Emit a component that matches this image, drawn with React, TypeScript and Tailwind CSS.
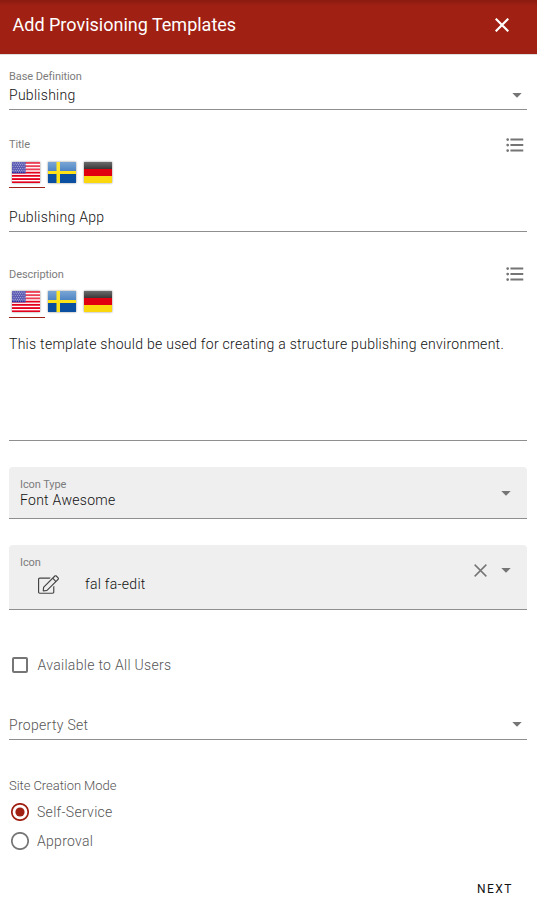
import React, { useState } from "react";

function Caret() {
  return (
    <svg className="block h-[5px] w-[10px] shrink-0" viewBox="0 0 10 5" fill="#757575">
      <path d="M0.3 0H9.7L5 4.8Z" />
    </svg>
  );
}

function Cross({ className, width }: { className: string; width: number }) {
  return (
    <svg className={className} viewBox="0 0 14 14" fill="none" stroke="currentColor" strokeWidth={width}>
      <path d="M0.7 0.7L13.3 13.3M13.3 0.7L0.7 13.3" />
    </svg>
  );
}

function ListIcon() {
  return (
    <svg className="mr-[1px] block size-[22px]" viewBox="0 0 24 24" fill="#757575">
      <path d="M7 5H21V7H7V5M7 13V11H21V13H7M4 4.5A1.5 1.5 0 0 1 5.5 6A1.5 1.5 0 0 1 4 7.5A1.5 1.5 0 0 1 2.5 6A1.5 1.5 0 0 1 4 4.5M4 10.5A1.5 1.5 0 0 1 5.5 12A1.5 1.5 0 0 1 4 13.5A1.5 1.5 0 0 1 2.5 12A1.5 1.5 0 0 1 4 10.5M7 19V17H21V19H7M4 16.5A1.5 1.5 0 0 1 5.5 18A1.5 1.5 0 0 1 4 19.5A1.5 1.5 0 0 1 2.5 18A1.5 1.5 0 0 1 4 16.5Z" />
    </svg>
  );
}

function EditIcon() {
  return (
    <svg className="block h-[19px] w-[21px]" viewBox="0 0 576 512" fill="#444">
      <path d="M417.8 315.5l20-20c3.8-3.8 10.2-1.1 10.2 4.2V464c0 26.5-21.5 48-48 48H48c-26.5 0-48-21.5-48-48V112c0-26.5 21.5-48 48-48h292.3c5.3 0 8 6.5 4.2 10.2l-20 20c-1.1 1.1-2.7 1.8-4.2 1.8H48c-8.8 0-16 7.2-16 16v352c0 8.8 7.2 16 16 16h352c8.8 0 16-7.2 16-16V319.7c0-1.6.6-3.1 1.8-4.2zm145.9-191.2L251.2 436.8l-99.9 11.1c-13.4 1.5-24.7-9.8-23.2-23.2l11.1-99.9L451.7 12.3c16.4-16.4 43-16.4 59.4 0l52.6 52.6c16.4 16.4 16.4 43 0 59.4zm-93.6 48.4L403.4 106 169.8 339.5l-8.3 75.1 75.1-8.3 233.5-233.6zm71-85.2l-52.6-52.6c-3.8-3.8-10.2-4-14.1 0L426 83.3l66.7 66.7 48.4-48.4c3.9-3.8 3.9-10.2 0-14.1z" />
    </svg>
  );
}

const flagClass = "block h-[21px] w-7 shadow-[0_0_2px_rgba(0,0,0,0.45)]";

function Gloss() {
  return <rect width="28" height="10" fill="#fff" opacity="0.25" />;
}

function UsFlag() {
  const stars = [0, 1, 2, 3, 4, 5].flatMap((r) =>
    [0, 1, 2, 3, 4, 5].map((c) => ({ x: 1 + c * 2.2 + (r % 2 ? 1 : 0), y: 1 + r * 1.8 })),
  );
  return (
    <svg className={flagClass} viewBox="0 0 28 21">
      <rect width="28" height="21" fill="#fff" />
      {[0, 1, 2, 3, 4, 5, 6].map((i) => (
        <rect key={i} y={i * 3.23} width="28" height="1.85" fill="#e4001c" />
      ))}
      <rect width="13.7" height="11.3" fill="#25259b" />
      {stars.map((s, i) => (
        <circle key={i} cx={s.x} cy={s.y} r="0.45" fill="#fff" />
      ))}
      <Gloss />
    </svg>
  );
}

function SeFlag() {
  return (
    <svg className={flagClass} viewBox="0 0 28 21">
      <defs>
        <linearGradient id="se" x1="0" y1="0" x2="0" y2="1">
          <stop offset="0" stopColor="#6f9ed2" />
          <stop offset="0.47" stopColor="#3c78bd" />
          <stop offset="0.48" stopColor="#0b50a0" />
          <stop offset="1" stopColor="#0b50a0" />
        </linearGradient>
      </defs>
      <rect width="28" height="21" fill="url(#se)" />
      <path d="M8.5 0H12V9H28V12H12V21H8.5V12H0V9H8.5Z" fill="#ffe319" />
      <rect width="28" height="9" fill="#fff" opacity="0.08" />
    </svg>
  );
}

function DeFlag() {
  return (
    <svg className={flagClass} viewBox="0 0 28 21">
      <defs>
        <linearGradient id="de" x1="0" y1="0" x2="0" y2="1">
          <stop offset="0" stopColor="#6b6b6b" />
          <stop offset="1" stopColor="#383838" />
        </linearGradient>
      </defs>
      <rect width="28" height="7" fill="url(#de)" />
      <rect y="7" width="28" height="7" fill="#e00010" />
      <rect y="14" width="28" height="7" fill="#fbd80d" />
    </svg>
  );
}

function Languages({ inset }: { inset: string }) {
  return (
    <div className="flex">
      <div className={"h-[27px] w-9 border-b border-[#a02013] pl-[3px] " + inset}>
        <UsFlag />
      </div>
      <div className={"w-9 pl-[3px] " + inset}>
        <SeFlag />
      </div>
      <div className={"w-9 pl-[3px] " + inset}>
        <DeFlag />
      </div>
    </div>
  );
}

const small = "text-[11px] leading-4 tracking-[-0.08px] text-[#7c7c7c]";
const value = "text-[14px] leading-5 font-light tracking-[0.28px] text-[#111]";
const muted = "text-[14px] leading-5 font-light tracking-[0.3px] text-[#555]";

export default function App() {
  const [mode, setMode] = useState("Self-Service");
  return (
    <div className="flex h-[905px] w-[537px] flex-col overflow-hidden bg-white font-['Roboto',sans-serif]">
      <header className="flex h-[54px] shrink-0 items-center justify-between bg-[#a02013] bg-linear-to-b from-[#8b1b10] to-[#a02013] to-[6px] pr-7 pb-[5px] pl-[12.5px] shadow-[0_1px_0_#ddd]">
        <h1 className="text-[18px] leading-6 font-normal text-white">Add Provisioning Templates</h1>
        <button className="text-white">
          <Cross className="block size-[14px]" width={2.2} />
        </button>
      </header>

      <main className="flex flex-col pr-[10px] pl-[9px]">
        <section className="h-14 border-b border-[#8f8f8f] pt-[15px]">
          <div className={small}>Base Definition</div>
          <div className="flex items-center justify-between pr-[5.5px]">
            <span className={value}>Publishing</span>
            <Caret />
          </div>
        </section>

        <section className="h-[122px] border-b border-[#8f8f8f] pt-[24px]">
          <div className="flex h-[22px] items-center justify-between">
            <span className={small}>Title</span>
            <ListIcon />
          </div>
          <div className="pt-[5px]">
            <Languages inset="pt-[1px]" />
          </div>
          <div className="pt-[19px]">
            <div className={value}>Publishing App</div>
          </div>
        </section>

        <section className="h-[209px] border-b border-[#8f8f8f] pt-[31px]">
          <div className="flex h-[22px] items-center justify-between">
            <span className={"pt-[2px] " + small}>Description</span>
            <ListIcon />
          </div>
          <div className="pt-[6px]">
            <Languages inset="pt-0" />
          </div>
          <p className={"pt-4 whitespace-nowrap " + value}>
            This template should be used for creating a structure publishing environment.
          </p>
        </section>

        <section className="mt-[26px] flex h-[52px] items-center justify-between rounded-t border-b border-[#8f8f8f] bg-[#efefef] pr-4 pl-[11px]">
          <div className="pt-[2px]">
            <div className={small + " h-[14px]"}>Icon Type</div>
            <div className={value + " -mt-[1px] mb-[1px]"}>Font Awesome</div>
          </div>
          <span className="pt-[2px]">
            <Caret />
          </span>
        </section>

        <section className="mt-[26px] flex h-[65px] justify-between rounded-t border-b border-[#8f8f8f] bg-[#efefef] pr-4 pl-[11px]">
          <div className="pt-[10px]">
            <div className={small}>Icon</div>
            <div className="flex items-center pt-[3px] pl-[18px]">
              <EditIcon />
              <span className={"pl-[26px] " + value}>fal fa-edit</span>
            </div>
          </div>
          <div className="flex h-[50px] items-center gap-[14px] text-[#757575]">
            <Cross className="block size-[13px]" width={1.6} />
            <Caret />
          </div>
        </section>

        <label className={"mt-[45px] flex h-5 items-center gap-[9.5px] pl-[3px] " + muted}>
          <span className="size-4 rounded-[2px] border-2 border-[#757575]" />
          Available to All Users
        </label>

        <section className="mt-10 flex h-[25px] items-start justify-between border-b border-[#8f8f8f] pr-[5.5px]">
          <span className={muted}>Property Set</span>
          <span className="pt-[7px]">
            <Caret />
          </span>
        </section>

        <div className="pt-[38px] text-[13px] leading-4 font-light tracking-[-0.05px] text-[#555]">
          Site Creation Mode
        </div>
        <div className="pt-[4px]">
          {["Self-Service", "Approval"].map((name) => (
            <label
              key={name}
              onClick={() => setMode(name)}
              className={"flex h-[29px] items-center gap-[8.5px] pl-[1.5px] " + muted}
            >
              <svg className="mb-[1px] block size-[18px]" viewBox="0 0 18 18" fill="none">
                <circle cx="9" cy="9" r="8.2" stroke={mode === name ? "#a02013" : "#757575"} strokeWidth="1.7" />
                {mode === name && <circle cx="9" cy="9" r="4.6" fill="#a02013" />}
              </svg>
              <span className="pb-[2px]">{name}</span>
            </label>
          ))}
        </div>
        <div className="flex justify-end pt-[23px] pr-[14px]">
          <button className="text-[12px] leading-5 font-normal tracking-[1.5px] text-[#111]">NEXT</button>
        </div>
      </main>
    </div>
  );
}
